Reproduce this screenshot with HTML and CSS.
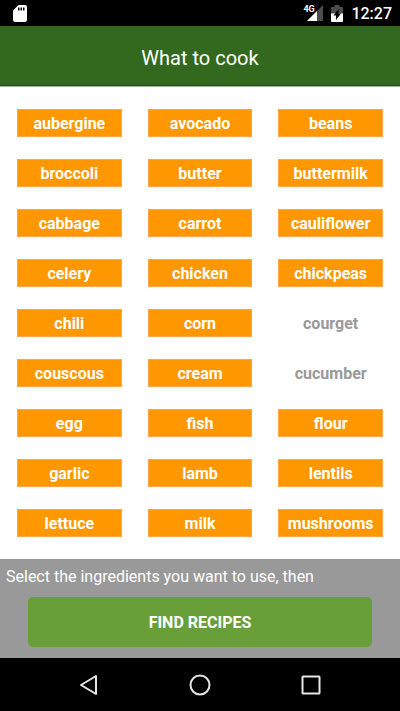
FILE: index.html
```html
<!DOCTYPE html>
<html lang="en">
<head>
<meta charset="utf-8">
<meta name="viewport" content="width=device-width, initial-scale=1">
<title>What to cook</title>
<link rel="stylesheet" href="styles.css">
</head>
<body>
<div class="status">
  <svg class="sd" width="16" height="20" viewBox="0 0 16 20" aria-hidden="true">
    <path fill="#fff" d="M6.500 2H13q2 0 2 2v13q0 2-2 2H3q-2 0-2-2V7.500z"/>
    <path fill="#000" d="M6 4.500h1.500v3H6zM8.500 4.500H10v3H8.500zM11 4.500h1.500v3H11z"/>
  </svg>
  <div class="signal">
    <span class="network">4G</span>
    <svg width="16" height="16" viewBox="0 0 16 16" aria-hidden="true">
      <path fill="#4c4c4c" d="M16 0v16H0z"/>
      <path fill="#fff" d="M10 6v10H0z"/>
    </svg>
  </div>
  <svg width="12" height="18" viewBox="0 0 12 18" aria-hidden="true">
    <path fill="#4c4c4c" d="M3.500 1h5v2H11q1 0 1 1v6H0V4q0-1 1-1h2.500z"/>
    <path fill="#fff" d="M0 9.500h12V17q0 1-1 1H1q-1 0-1-1z"/>
    <path fill="#000" d="M7.500 5L2.500 11.500H5V16l5-6.500H7.500z"/>
  </svg>
  <span class="clock">12:27</span>
</div>
<header class="header"><h1 class="title">What to cook</h1></header>
<main class="ingredients">
  <button class="item" type="button" aria-pressed="true">aubergine</button>
  <button class="item" type="button" aria-pressed="true">avocado</button>
  <button class="item" type="button" aria-pressed="true">beans</button>
  <button class="item" type="button" aria-pressed="true">broccoli</button>
  <button class="item" type="button" aria-pressed="true">butter</button>
  <button class="item" type="button" aria-pressed="true">buttermilk</button>
  <button class="item" type="button" aria-pressed="true">cabbage</button>
  <button class="item" type="button" aria-pressed="true">carrot</button>
  <button class="item" type="button" aria-pressed="true">cauliflower</button>
  <button class="item" type="button" aria-pressed="true">celery</button>
  <button class="item" type="button" aria-pressed="true">chicken</button>
  <button class="item" type="button" aria-pressed="true">chickpeas</button>
  <button class="item" type="button" aria-pressed="true">chili</button>
  <button class="item" type="button" aria-pressed="true">corn</button>
  <button class="item" type="button" aria-pressed="false">courget</button>
  <button class="item" type="button" aria-pressed="true">couscous</button>
  <button class="item" type="button" aria-pressed="true">cream</button>
  <button class="item" type="button" aria-pressed="false">cucumber</button>
  <button class="item" type="button" aria-pressed="true">egg</button>
  <button class="item" type="button" aria-pressed="true">fish</button>
  <button class="item" type="button" aria-pressed="true">flour</button>
  <button class="item" type="button" aria-pressed="true">garlic</button>
  <button class="item" type="button" aria-pressed="true">lamb</button>
  <button class="item" type="button" aria-pressed="true">lentils</button>
  <button class="item" type="button" aria-pressed="true">lettuce</button>
  <button class="item" type="button" aria-pressed="true">milk</button>
  <button class="item" type="button" aria-pressed="true">mushrooms</button>
</main>
<section class="panel">
  <p class="hint">Select the ingredients you want to use, then</p>
  <button class="find" type="button">FIND RECIPES</button>
</section>
<nav class="nav">
  <button class="key" type="button" aria-label="Back">
    <svg width="24" height="24" viewBox="0 0 24 24"><path d="M4 12L19 3v18z"/></svg>
  </button>
  <button class="key" type="button" aria-label="Home">
    <svg width="24" height="24" viewBox="0 0 24 24"><circle cx="12" cy="12" r="9.500"/></svg>
  </button>
  <button class="key" type="button" aria-label="Overview">
    <svg width="24" height="24" viewBox="0 0 24 24"><rect x="3.500" y="3.500" width="17" height="17" rx="0.500"/></svg>
  </button>
</nav>
</body>
</html>
```
FILE: styles.css
```css
* {
  box-sizing: border-box;
}

body {
  display: flex;
  flex-direction: column;
  min-height: 100vh;
  margin: 0;
  background: #fff;
  font-family: Roboto, "Liberation Sans", sans-serif;
}

button {
  margin: 0;
  padding: 0;
  border: 0;
  font-family: inherit;
}

.status {
  display: flex;
  align-items: center;
  gap: 8px;
  height: 26px;
  padding: 0 8px 0 12px;
  background: #000;
  color: #fff;
}

.sd {
  margin-right: auto;
}

.signal {
  position: relative;
  display: flex;
}

.network {
  position: absolute;
  top: -1px;
  left: -4px;
  font-size: 9px;
  font-weight: 700;
  line-height: 10px;
}

.clock {
  padding-top: 2px;
  font-size: 16px;
  font-weight: 500;
  line-height: 24px;
}

.header {
  padding: 18px 0 13px;
  border-bottom: 1px solid #1f4f10;
  background: #33691e;
  box-shadow: 0 1px 0 #b0b0b0;
  text-align: center;
}

.title {
  margin: 0;
  color: #fff;
  font-size: 20px;
  font-weight: 400;
  line-height: 28px;
}

.ingredients {
  flex: 1;
  display: grid;
  grid-template-columns: repeat(3, 1fr);
  align-content: start;
  gap: 22px 26px;
  padding: 23px 17px 22px;
}

.item {
  height: 28px;
  padding-top: 2px;
  background: #ff9800;
  border: 1px solid #ffa64d;
  color: #fff;
  font-size: 16px;
  font-weight: 700;
  line-height: 24px;
}

.item[aria-pressed="false"] {
  border-color: transparent;
  background: none;
  color: #999;
}

.panel {
  display: flex;
  flex-direction: column;
  gap: 8px;
  padding: 6px 28px 11px;
  background: #999;
}

.hint {
  margin: 0 -22px;
  color: #fff;
  font-size: 16px;
  line-height: 24px;
}

.find {
  height: 50px;
  border-radius: 5px;
  background: #689f38;
  color: #fff;
  font-size: 16px;
  font-weight: 700;
}

.nav {
  display: flex;
  align-items: center;
  justify-content: center;
  gap: 63px;
  height: 53px;
  background: #000;
}

.key {
  display: grid;
  place-items: center;
  width: 48px;
  height: 48px;
  background: none;
}

.key svg {
  fill: none;
  stroke: #e6e6e6;
  stroke-width: 2;
  stroke-linejoin: round;
}
```
